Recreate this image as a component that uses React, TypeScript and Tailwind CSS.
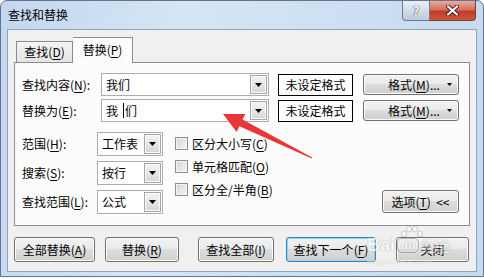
import React from 'react'

const font = { fontFamily: '"Noto Sans CJK SC", "Microsoft YaHei", sans-serif' }
const latin = { fontFamily: 'Arial, "Liberation Sans", sans-serif' }

function Key({ k }: { k: string }) {
  return <span className="underline underline-offset-[2px] decoration-1">{k}</span>
}

function Label({ text, k, after = ':' }: { text: string; k: string; after?: string }) {
  return (
    <span>
      {text}(<Key k={k} />){after}
    </span>
  )
}

function Arrow() {
  return (
    <svg width="7" height="4" viewBox="0 0 7 4">
      <polygon points="0,0 7,0 3.5,4" fill="#000" />
    </svg>
  )
}

function DropButton() {
  return (
    <div className="flex h-full w-[17px] items-center justify-center border border-[#a6a6a6] bg-[linear-gradient(#f3f3f3,#e6e6e6_50%,#d4d4d4)] shadow-[inset_0_0_0_1px_#fafafa]">
      <Arrow />
    </div>
  )
}

function Combo({ value, w, h }: { value: React.ReactNode; w: string; h: string }) {
  return (
    <div className={`flex ${w} ${h} items-stretch border border-[#abadb3] bg-white p-px`}>
      <div className="flex flex-1 items-center pl-[3px] text-[12px] text-black">{value}</div>
      <DropButton />
    </div>
  )
}

function WinButton({
  children,
  w,
  h = 'h-[25px]',
  focused = false,
  className = '',
}: {
  children: React.ReactNode
  w: string
  h?: string
  focused?: boolean
  className?: string
}) {
  return (
    <div
      className={`flex ${w} ${h} items-center justify-center rounded-[3px] border text-[12px] text-black bg-[linear-gradient(#f2f2f2_0%,#ebebeb_45%,#dddddd_50%,#cfcfcf_100%)] ${
        focused
          ? 'border-[#3c7fb1] shadow-[inset_0_0_0_1px_#8ad9fb]'
          : 'border-[#707070] shadow-[inset_0_0_0_1px_#fbfbfb]'
      } ${className}`}
    >
      {children}
    </div>
  )
}

function Check({ children }: { children: React.ReactNode }) {
  return (
    <div className="flex h-[23px] items-center gap-[4px] text-[12px] text-black">
      <div className="h-[13px] w-[13px] border border-[#8f8f8f] bg-[linear-gradient(135deg,#d2d2d2,#f7f7f7)] shadow-[inset_0_0_0_1px_#f6f6f6]" />
      {children}
    </div>
  )
}

function FindRow({ label, value }: { label: React.ReactNode; value: React.ReactNode }) {
  return (
    <div className="flex items-center">
      <div className="w-[79px] text-[12px] text-black">{label}</div>
      <Combo value={value} w="w-[168px]" h="h-[23px]" />
      <div className="ml-[9px] flex h-[22px] w-[75px] items-center justify-center border border-black bg-white text-[12px] text-black">
        未设定格式
      </div>
      <WinButton w="w-[96px]" h="h-[21px]" className="ml-[10px] relative">
        <span className="ml-[6px]">
          格式(<Key k="M" />)...
        </span>
        <span className="absolute right-[6px] top-[8px]">
          <svg width="5" height="3" viewBox="0 0 5 3">
            <polygon points="0,0 5,0 2.5,3" fill="#000" />
          </svg>
        </span>
      </WinButton>
    </div>
  )
}

function OptRow({ label, value }: { label: React.ReactNode; value: string }) {
  return (
    <div className="flex items-center">
      <div className="w-[75px] text-[12px] text-black">{label}</div>
      <Combo value={value} w="w-[66px]" h="h-[24px]" />
    </div>
  )
}

export default function App() {
  return (
    <div className="relative h-[279px] w-[484px] overflow-hidden bg-white leading-none" style={font}>
      <div className="flex h-[277px] w-[484px] flex-col rounded-t-[7px] border border-[#5f7590] bg-[linear-gradient(100deg,#c3d7ee_0%,#d6e5f5_35%,#cfe0f3_60%,#c5d9ef_100%)]">
        {/* title bar */}
        <div className="flex h-[28px] items-start">
          <div className="pl-[7px] pt-[8px] text-[12px] text-black">查找和替换</div>
          <div className="ml-auto mr-[7px] flex">
            <div className="flex h-[20px] w-[28px] items-center justify-center rounded-bl-[4px] border border-t-0 border-[#6b7d93] bg-[linear-gradient(#e9eff6,#d3dde9_50%,#bcc9da)] text-[13px] font-bold text-white [text-shadow:0_0_1px_#333,0_0_1px_#333]">
              ?
            </div>
            <div className="flex h-[20px] w-[46px] items-center justify-center rounded-br-[4px] border border-t-0 border-l-0 border-[#7f3a33] bg-[linear-gradient(#e7ab9f,#d7705f_45%,#c23c2c_55%,#d0563e)]">
              <svg width="13" height="11" viewBox="0 0 13 11">
                <path d="M2 1.5 L11 9.5 M11 1.5 L2 9.5" stroke="#4a1e18" strokeWidth="4" strokeLinecap="round" />
                <path d="M2 1.5 L11 9.5 M11 1.5 L2 9.5" stroke="#ffffff" strokeWidth="2.2" strokeLinecap="round" />
              </svg>
            </div>
          </div>
        </div>

        {/* client area */}
        <div className="mx-[6px] flex h-[243px] flex-col border border-[#8fa3bd] bg-[#f0f0f0] pl-[6px] pt-[8px]">
          {/* tabs */}
          <div className="flex h-[24px] items-end pl-[2px]">
            <div className="flex h-[21px] w-[57px] items-center justify-center border border-b-0 border-[#898c95] bg-[linear-gradient(#f4f4f4,#e4e4e4)] text-[12px] text-black">
              <Label text="查找" k="D" after="" />
            </div>
            <div className="relative z-10 -mb-px flex h-[26px] w-[60px] items-start justify-center border border-b-0 border-l-0 border-[#898c95] bg-[#fcfcfc] pt-[6px] text-[12px] text-black">
              <Label text="替换" k="P" after="" />
            </div>
          </div>

          {/* panel */}
          <div className="flex h-[164px] w-[456px] flex-col border border-[#898c95] bg-[#fcfcfc] pl-[7px] pt-[10px]">
            <FindRow label={<Label text="查找内容" k="N" />} value="我们" />
            <div className="mt-[3px]">
              <FindRow
                label={<Label text="替换为" k="E" />}
                value={
                  <span className="flex items-center">
                    我<span className="ml-[5px] mr-px inline-block h-[15px] w-px bg-black" />们
                  </span>
                }
              />
            </div>

            <div className="mt-[10px] flex">
              <div className="flex flex-col gap-[5px]">
                <OptRow label={<Label text="范围" k="H" />} value="工作表" />
                <OptRow label={<Label text="搜索" k="S" />} value="按行" />
                <OptRow label={<Label text="查找范围" k="L" />} value="公式" />
              </div>
              <div className="ml-[12px] flex flex-col">
                <Check>
                  <Label text="区分大小写" k="C" after="" />
                </Check>
                <Check>
                  <Label text="单元格匹配" k="O" after="" />
                </Check>
                <Check>
                  <Label text="区分全/半角" k="B" after="" />
                </Check>
              </div>
              <div className="ml-auto mr-[10px] flex items-end pb-px">
                <WinButton w="w-[77px]" h="h-[23px]">
                  选项(<Key k="T" />)&nbsp;&nbsp;&lt;&lt;
                </WinButton>
              </div>
            </div>
          </div>

          {/* bottom buttons */}
          <div className="mt-[11px] flex">
            <WinButton w="w-[81px]">
              <Label text="全部替换" k="A" after="" />
            </WinButton>
            <WinButton w="w-[74px]" className="ml-[10px]">
              <Label text="替换" k="R" after="" />
            </WinButton>
            <WinButton w="w-[76px]" className="ml-[19px]">
              <Label text="查找全部" k="I" after="" />
            </WinButton>
            <WinButton w="w-[90px]" focused className="ml-[12px]">
              <Label text="查找下一个" k="F" after="" />
            </WinButton>
            <WinButton w="w-[73px]" className="ml-[20px]">
              关闭
            </WinButton>
          </div>
        </div>
      </div>

      {/* red annotation arrow */}
      <svg className="pointer-events-none absolute left-0 top-0" width="484" height="279">
        <polygon
          points="223,114 245.4,113.9 242.6,119.5 312.2,157.6 311.8,158.4 239.4,126.3 236.6,131.9"
          fill="#e8363a"
        />
      </svg>

      {/* baidu watermark */}
      <svg className="pointer-events-none absolute left-[398px] top-[225px] opacity-50" width="28" height="14" viewBox="0 0 28 14">
        <g fill="#ffffff" stroke="#8a8a8a" strokeWidth="0.8">
          <ellipse cx="6" cy="9" rx="2.5" ry="3" />
          <ellipse cx="11" cy="4" rx="2.5" ry="3" />
          <ellipse cx="17" cy="4" rx="2.5" ry="3" />
          <ellipse cx="22" cy="9" rx="2.5" ry="3" />
        </g>
      </svg>
      <div className="pointer-events-none absolute left-[367px] top-[236px] flex items-center opacity-60">
        <span className="text-[18px] font-bold leading-none text-white [text-shadow:0_0_1px_#8a8a8a,0_0_1px_#8a8a8a]" style={latin}>
          Bai
        </span>
        <span className="ml-[2px] flex h-[15px] w-[22px] items-center justify-center rounded-[5px] border border-[#8a8a8a] text-[12px] font-bold text-white [text-shadow:0_0_1px_#8a8a8a,0_0_1px_#8a8a8a]" style={latin}>
          du
        </span>
        <span className="ml-[2px] text-[15px] leading-none text-white [text-shadow:0_0_1px_#8a8a8a,0_0_1px_#8a8a8a]">经验</span>
      </div>
      <div className="pointer-events-none absolute left-[367px] top-[258px] text-[8px] leading-none text-white opacity-60 [text-shadow:0_0_1px_#9a9a9a]" style={latin}>
        jingyan.baidu.com
      </div>
    </div>
  )
}
